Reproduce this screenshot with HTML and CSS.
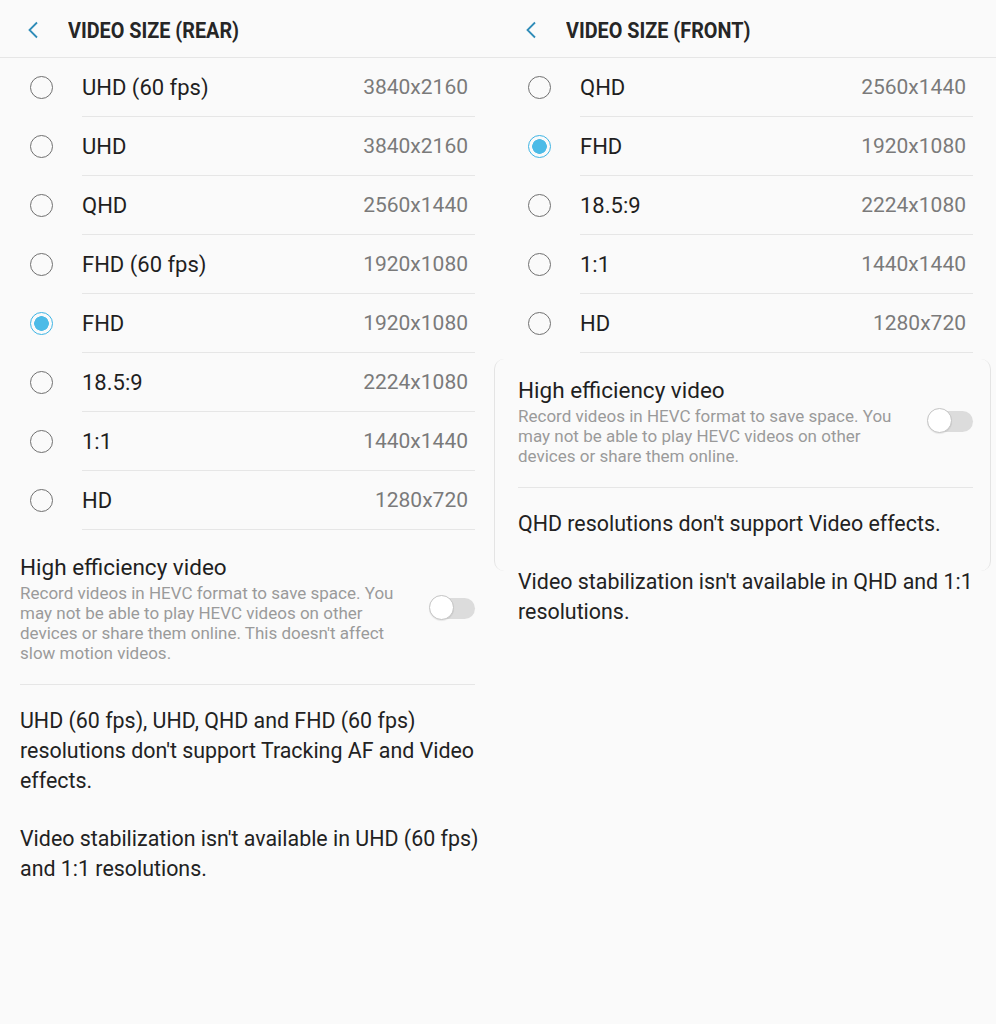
FILE: index.html
```html
<!DOCTYPE html>
<html lang="en">
<head>
  <meta charset="UTF-8">
  <meta name="viewport" content="width=device-width, initial-scale=1.0">
  <title>Video size</title>
  <link rel="stylesheet" href="styles.css">
</head>
<body>
  <div class="panel">
    <div class="header">
      <svg class="back" width="12" height="18" viewBox="0 0 12 18"><polyline points="10,1.5 2.5,9 10,16.5" fill="none" stroke="#2f8cb8" stroke-width="1.8"/></svg>
      <span class="title">VIDEO SIZE (REAR)</span>
    </div>
    <ul class="options">
      <li class="row"><span class="radio"></span><div class="row-body"><span class="label">UHD (60 fps)</span><span class="value">3840x2160</span></div></li>
      <li class="row"><span class="radio"></span><div class="row-body"><span class="label">UHD</span><span class="value">3840x2160</span></div></li>
      <li class="row"><span class="radio"></span><div class="row-body"><span class="label">QHD</span><span class="value">2560x1440</span></div></li>
      <li class="row"><span class="radio"></span><div class="row-body"><span class="label">FHD (60 fps)</span><span class="value">1920x1080</span></div></li>
      <li class="row"><span class="radio checked"></span><div class="row-body"><span class="label">FHD</span><span class="value">1920x1080</span></div></li>
      <li class="row"><span class="radio"></span><div class="row-body"><span class="label">18.5:9</span><span class="value">2224x1080</span></div></li>
      <li class="row"><span class="radio"></span><div class="row-body"><span class="label">1:1</span><span class="value">1440x1440</span></div></li>
      <li class="row"><span class="radio"></span><div class="row-body"><span class="label">HD</span><span class="value">1280x720</span></div></li>
    </ul>
    <div class="hev">
      <div class="hev-text">
        <div class="hev-title">High efficiency video</div>
        <div class="hev-desc">Record videos in HEVC format to save space. You may not be able to play HEVC videos on other devices or share them online. This doesn't affect slow motion videos.</div>
      </div>
      <span class="toggle"><span class="knob"></span></span>
    </div>
    <div class="notes">
      <p>UHD (60 fps), UHD, QHD and FHD (60 fps) resolutions don't support Tracking AF and Video effects.</p>
      <p>Video stabilization isn't available in UHD (60 fps) and 1:1 resolutions.</p>
    </div>
  </div>

  <div class="panel">
    <div class="header">
      <svg class="back" width="12" height="18" viewBox="0 0 12 18"><polyline points="10,1.5 2.5,9 10,16.5" fill="none" stroke="#2f8cb8" stroke-width="1.8"/></svg>
      <span class="title">VIDEO SIZE (FRONT)</span>
    </div>
    <ul class="options">
      <li class="row"><span class="radio"></span><div class="row-body"><span class="label">QHD</span><span class="value">2560x1440</span></div></li>
      <li class="row"><span class="radio checked"></span><div class="row-body"><span class="label">FHD</span><span class="value">1920x1080</span></div></li>
      <li class="row"><span class="radio"></span><div class="row-body"><span class="label">18.5:9</span><span class="value">2224x1080</span></div></li>
      <li class="row"><span class="radio"></span><div class="row-body"><span class="label">1:1</span><span class="value">1440x1440</span></div></li>
      <li class="row"><span class="radio"></span><div class="row-body"><span class="label">HD</span><span class="value">1280x720</span></div></li>
    </ul>
    <div class="card">
      <div class="hev">
        <div class="hev-text">
          <div class="hev-title">High efficiency video</div>
          <div class="hev-desc">Record videos in HEVC format to save space. You may not be able to play HEVC videos on other devices or share them online.</div>
        </div>
        <span class="toggle"><span class="knob"></span></span>
      </div>
      <div class="notes">
        <p>QHD resolutions don't support Video effects.</p>
      </div>
    </div>
    <div class="notes more">
      <p>Video stabilization isn't available in QHD and 1:1 resolutions.</p>
    </div>
  </div>
</body>
</html>
```

FILE: styles.css
```css
html, body {
  margin: 0;
  padding: 0;
  height: 100%;
  background-color: #fafafa;
}

body {
  display: flex;
  font-family: Roboto, "Liberation Sans", sans-serif;
  color: #222;
}

.panel {
  width: 498px;
  flex: none;
}

.header {
  display: flex;
  align-items: center;
  height: 58px;
  padding-top: 3px;
  box-sizing: border-box;
  border-bottom: 1px solid #e6e6e6;
}

.back {
  margin-left: 27px;
  margin-right: 29px;
}

.title {
  display: inline-block;
  font-size: 22px;
  font-weight: 700;
  color: #262626;
  transform: scaleX(0.9);
  transform-origin: left center;
  white-space: nowrap;
}

.options {
  list-style: none;
  margin: 0;
  padding: 0 23px 0 0;
}

.row {
  display: flex;
  height: 59px;
}

.radio {
  flex: none;
  width: 82px;
  display: flex;
  align-items: center;
  justify-content: center;
}

.radio::before {
  content: '';
  width: 21px;
  height: 21px;
  border: 1.8px solid #707070;
  border-radius: 50%;
  box-sizing: content-box;
}

.radio.checked::before {
  border-color: #3db4e4;
  background: radial-gradient(circle, #4cbbe7 0, #4cbbe7 7px, transparent 7.6px);
}

.row-body {
  flex: 1;
  display: flex;
  align-items: center;
  justify-content: space-between;
  border-bottom: 1px solid #e6e6e6;
  padding-right: 7px;
}

.label {
  font-size: 22px;
  color: #1f1f1f;
}

.value {
  font-size: 21px;
  color: #7a7a7a;
}

.hev {
  display: flex;
  align-items: center;
  margin: 0 23px 0 20px;
  padding: 23px 0 21px;
  border-bottom: 1px solid #e6e6e6;
}

.hev-text {
  flex: 1;
  padding-right: 22px;
}

.hev-title {
  font-size: 22.5px;
  line-height: 28px;
  margin-bottom: 2px;
  color: #1f1f1f;
}

.hev-desc {
  font-size: 17px;
  line-height: 20px;
  color: #9a9a9a;
}

.toggle {
  position: relative;
  flex: none;
  width: 45px;
  height: 21px;
  border-radius: 11px;
  background-color: #dcdcdc;
}

.knob {
  position: absolute;
  left: -1px;
  top: -3px;
  width: 23px;
  height: 23px;
  border-radius: 50%;
  background-color: #fff;
  border: 1.5px solid #c4c4c4;
  box-shadow: 0 1px 1px rgba(0, 0, 0, 0.08);
}

.notes {
  padding: 21px 14px 0 20px;
}

.notes p {
  margin: 0;
  font-size: 21.4px;
  line-height: 30px;
  color: #222;
}

.notes p + p,
.notes.more {
  margin-top: 28px;
}

.notes.more {
  padding-top: 0;
}

.card {
  position: relative;
}

.card::before {
  content: '';
  position: absolute;
  top: 6px;
  bottom: -32px;
  left: -4px;
  right: 5px;
  border-left: 1px solid #e4e4e4;
  border-right: 1px solid #e4e4e4;
  border-radius: 10px;
  pointer-events: none;
}
```
